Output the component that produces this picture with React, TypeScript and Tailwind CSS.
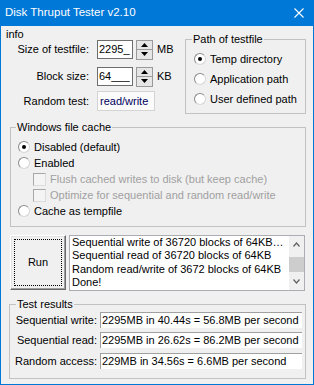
import React from "react";

const Radio = ({ checked }: { checked?: boolean }) => (
  <span className="w-[12px] h-[12px] shrink-0 rounded-full border border-t-[#8a8a8a] border-l-[#8a8a8a] border-b-[#d6d6d6] border-r-[#d6d6d6] bg-white flex items-center justify-center">
    {checked && <span className="w-[4px] h-[4px] rounded-full bg-black" />}
  </span>
);

const Check = () => (
  <span className="w-[13px] h-[13px] shrink-0 border border-t-[#a8a8a8] border-l-[#a8a8a8] border-b-[#dcdcdc] border-r-[#dcdcdc] bg-[#f4f4f4]" />
);

const Group = ({
  title,
  className,
  legendClass,
  children,
}: {
  title: string;
  className: string;
  legendClass?: string;
  children: React.ReactNode;
}) => (
  <div className={"relative border border-[#c2c2c2] shrink-0 " + className}>
    <span
      className={
        "absolute top-[-7px] bg-[#f0f0f0] px-[1px] leading-[12px] whitespace-nowrap " +
        (legendClass ?? "left-[6px]")
      }
    >
      {title}
    </span>
    {children}
  </div>
);

const Spinner = () => (
  <div className="ml-[3px] w-[17px] h-[20px] border border-[#9a9a9a] bg-[#e6e6e6] flex flex-col">
    <div className="flex-1 flex items-center justify-center border-b border-[#9a9a9a]">
      <svg width="7" height="4" viewBox="0 0 7 4">
        <polygon points="0,4 7,4 3.5,0" fill="#000" />
      </svg>
    </div>
    <div className="flex-1 flex items-center justify-center">
      <svg width="7" height="4" viewBox="0 0 7 4">
        <polygon points="0,0 7,0 3.5,4" fill="#000" />
      </svg>
    </div>
  </div>
);

const ResultRow = ({ label, value, className }: { label: string; value: string; className?: string }) => (
  <div className={"flex items-center h-[16px] " + (className ?? "")}>
    <span className="w-[87px] text-right whitespace-nowrap">{label}</span>
    <div className="ml-[3px] w-[202px] h-[16px] bg-white border-t border-l border-[#a0a0a0] pl-[1px] flex items-center whitespace-nowrap">
      {value}
    </div>
  </div>
);

export default function App() {
  return (
    <div className="w-[314px] h-[385px] bg-[#0078d7] px-[1px] pb-[1px] font-['Liberation_Sans',Arial,sans-serif] text-[11px] text-black leading-none flex flex-col">
      {/* Title bar */}
      <div className="h-[26px] shrink-0 flex items-center justify-between pl-[4px] pr-[9px] text-white text-[11.5px]">
        <span>Disk Thruput Tester v2.10</span>
        <svg width="10" height="10" viewBox="0 0 10 10">
          <path d="M0.5 0.5 L9.5 9.5 M9.5 0.5 L0.5 9.5" stroke="#fff" strokeWidth="1.1" />
        </svg>
      </div>

      {/* Body */}
      <div className="flex-1 bg-[#f0f0f0] flex flex-col">
        {/* Top section */}
        <div className="h-[88px] flex items-start shrink-0">
          <div className="w-[184px] flex flex-col">
            <div className="mt-[2px] h-[12px] leading-[12px] pl-[5px]">info</div>
            <div className="h-[19px] flex items-center">
              <span className="w-[88px] text-right">Size of testfile:</span>
              <div className="ml-[8px] w-[36px] h-[19px] bg-white border border-[#6e6e6e] flex items-center pl-[1px]">
                2295_
              </div>
              <Spinner />
              <span className="ml-[4px]">MB</span>
            </div>
            <div className="mt-[8px] h-[19px] flex items-center">
              <span className="w-[88px] text-right">Block size:</span>
              <div className="ml-[8px] w-[36px] h-[19px] bg-white border border-[#6e6e6e] flex items-center pl-[1px]">
                64___
              </div>
              <Spinner />
              <span className="ml-[4px]">KB</span>
            </div>
            <div className="mt-[5px] h-[20px] flex items-center">
              <span className="w-[88px] text-right">Random test:</span>
              <div className="ml-[8px] w-[58px] h-[20px] bg-[#fbfbfb] border border-[#d4d4d4] flex items-center pl-[2px] text-[#000060]">
                read/write
              </div>
            </div>
          </div>
          <Group title="Path of testfile" className="mt-[13px] w-[121px] h-[75px]">
            <div className="pt-[9px] pl-[8px] flex flex-col">
              <div className="h-[20px] flex items-center gap-[4px]">
                <Radio checked />
                <span>Temp directory</span>
              </div>
              <div className="h-[20px] flex items-center gap-[4px]">
                <Radio />
                <span>Application path</span>
              </div>
              <div className="h-[20px] flex items-center gap-[4px]">
                <Radio />
                <span>User defined path</span>
              </div>
            </div>
          </Group>
        </div>

        {/* Windows file cache */}
        <Group title="Windows file cache" className="mt-[13px] ml-[9px] w-[296px] h-[100px]" legendClass="left-[5px]">
          <div className="pt-[11px] pl-[7px] flex flex-col">
            <div className="h-[16px] flex items-center gap-[4px]">
              <Radio checked />
              <span>Disabled (default)</span>
            </div>
            <div className="h-[16px] flex items-center gap-[4px]">
              <Radio />
              <span>Enabled</span>
            </div>
            <div className="h-[16px] flex items-center gap-[4px] pl-[15px] text-[#a0a0a0]">
              <Check />
              <span>Flush cached writes to disk (but keep cache)</span>
            </div>
            <div className="h-[16px] flex items-center gap-[4px] pl-[15px] text-[#a0a0a0]">
              <Check />
              <span>Optimize for sequential and random read/write</span>
            </div>
            <div className="h-[16px] flex items-center gap-[4px]">
              <Radio />
              <span>Cache as tempfile</span>
            </div>
          </div>
        </Group>

        {/* Run + log */}
        <div className="mt-[8px] ml-[9px] flex h-[56px] shrink-0">
          <button className="relative w-[56px] h-[55px] bg-[#f0f0f0] border border-t-white border-l-white border-b-[#696969] border-r-[#696969] shadow-[inset_-1px_-1px_0_#a0a0a0,inset_1px_1px_0_#e3e3e3] flex items-center justify-center text-[11px]">
            <span className="absolute inset-[3px] border border-dotted border-black" />
            Run
          </button>
          <div className="ml-[3px] w-[236px] h-[56px] bg-white border border-[#abadb3] flex">
            <div className="flex-1 pl-[2px] leading-[13.4px] overflow-hidden whitespace-nowrap">
              <div>Sequential write of 36720 blocks of 64KB…</div>
              <div>Sequential read of 36720 blocks of 64KB</div>
              <div>Random read/write of 3672 blocks of 64KB</div>
              <div>Done!</div>
            </div>
            <div className="w-[15px] bg-[#f0f0f0] flex flex-col">
              <div className="h-[17px] flex items-center justify-center">
                <svg width="7" height="5" viewBox="0 0 7 5">
                  <path d="M0.5 4.5 L3.5 1 L6.5 4.5" stroke="#606060" strokeWidth="1.2" fill="none" />
                </svg>
              </div>
              <div className="mt-[4px] h-[15px] bg-[#cdcdcd]" />
              <div className="flex-1" />
              <div className="h-[17px] flex items-center justify-center">
                <svg width="7" height="5" viewBox="0 0 7 5">
                  <path d="M0.5 0.5 L3.5 4 L6.5 0.5" stroke="#606060" strokeWidth="1.2" fill="none" />
                </svg>
              </div>
            </div>
          </div>
        </div>

        {/* Test results */}
        <Group title="Test results" className="mt-[13px] ml-[8px] w-[297px] h-[75px]">
          <div className="pt-[7px] flex flex-col">
            <ResultRow label="Sequential write:" value="2295MB in 40.44s = 56.8MB per second" />
            <ResultRow className="mt-[4px]" label="Sequential read:" value="2295MB in 26.62s = 86.2MB per second" />
            <ResultRow className="mt-[5px]" label="Random access:" value="229MB in 34.56s = 6.6MB per second" />
          </div>
        </Group>
      </div>
    </div>
  );
}
